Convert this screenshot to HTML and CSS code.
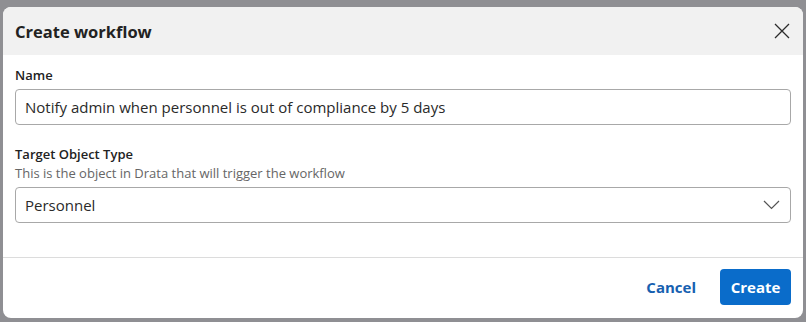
FILE: index.html
```html
<!DOCTYPE html>
<html lang="en">
<head>
<meta charset="utf-8">
<title>Create workflow</title>
<link rel="stylesheet" href="styles.css">
</head>
<body>
<div class="backdrop">
  <div class="modal">
    <div class="modal-header">
      <h1 class="modal-title">Create workflow</h1>
      <button class="close-btn" aria-label="Close">
        <svg width="16" height="16" viewBox="0 0 16 16"><path d="M1 1L15 15M15 1L1 15" stroke="#2b2b2b" stroke-width="1.3" fill="none"/></svg>
      </button>
    </div>
    <div class="modal-body">
      <div class="field">
        <label class="field-label">Name</label>
        <div class="input">Notify admin when personnel is out of compliance by 5 days</div>
      </div>
      <div class="field field-second">
        <label class="field-label">Target Object Type</label>
        <div class="field-help">This is the object in Drata that will trigger the workflow</div>
        <div class="input select">
          <span>Personnel</span>
          <svg class="chevron" width="17" height="10" viewBox="0 0 17 10"><path d="M1 1L8.5 8.5L16 1" stroke="#555" stroke-width="1.2" fill="none"/></svg>
        </div>
      </div>
    </div>
    <div class="modal-footer">
      <button class="btn btn-link">Cancel</button>
      <button class="btn btn-primary">Create</button>
    </div>
  </div>
</div>
</body>
</html>
```

FILE: styles.css
```css
html, body {
  margin: 0;
  padding: 0;
}
body {
  background: #8f8f93;
  font-family: "Open Sans", "Noto Sans", sans-serif;
  color: #2a2a2a;
  width: 806px;
  height: 322px;
  overflow: hidden;
}
.backdrop {
  padding: 7px 3px 0 3px;
}
.modal {
  width: 800px;
  height: 311px;
  background: #fff;
  border-radius: 8px;
  overflow: hidden;
  display: flex;
  flex-direction: column;
}
.modal-header {
  height: 48px;
  flex: none;
  background: #f1f1f1;
  display: flex;
  align-items: center;
  justify-content: space-between;
  padding: 0 13px 0 12px;
}
.modal-title {
  margin: 0;
  font-size: 16.5px;
  font-weight: 700;
  color: #222;
}
.close-btn {
  border: 0;
  background: none;
  padding: 0;
  width: 16px;
  height: 16px;
  display: flex;
}
.modal-body {
  padding: 12px 12px 0 12px;
  height: 190px;
  flex: none;
  border-bottom: 1px solid #dcdcdc;
}
.field {
  display: flex;
  flex-direction: column;
}
.field-second {
  margin-top: 21px;
}
.field-label {
  font-size: 13px;
  line-height: 16px;
  font-weight: 600;
  color: #222;
  margin-bottom: 6px;
}
.field-second .field-label {
  margin-bottom: 2px;
}
.field-help {
  font-size: 13px;
  line-height: 18px;
  color: #666;
  margin-bottom: 5px;
}
.input {
  height: 36px;
  box-sizing: border-box;
  border: 1px solid #a8a8a8;
  border-radius: 4px;
  padding: 0 9px;
  display: flex;
  align-items: center;
  font-size: 15px;
  color: #2a2a2a;
}
.select {
  justify-content: space-between;
  padding-right: 10px;
}
.modal-footer {
  flex: 1;
  display: flex;
  align-items: center;
  justify-content: flex-end;
  gap: 24px;
  padding: 0 12px 2px 0;
}
.btn {
  font-family: inherit;
  font-size: 15px;
  font-weight: 700;
  border: 0;
  cursor: pointer;
}
.btn-link {
  background: none;
  color: #1660b0;
  padding: 0;
}
.btn-primary {
  background: #0a6cca;
  color: #fff;
  height: 36px;
  width: 71px;
  border-radius: 4px;
  padding: 0;
}
```
